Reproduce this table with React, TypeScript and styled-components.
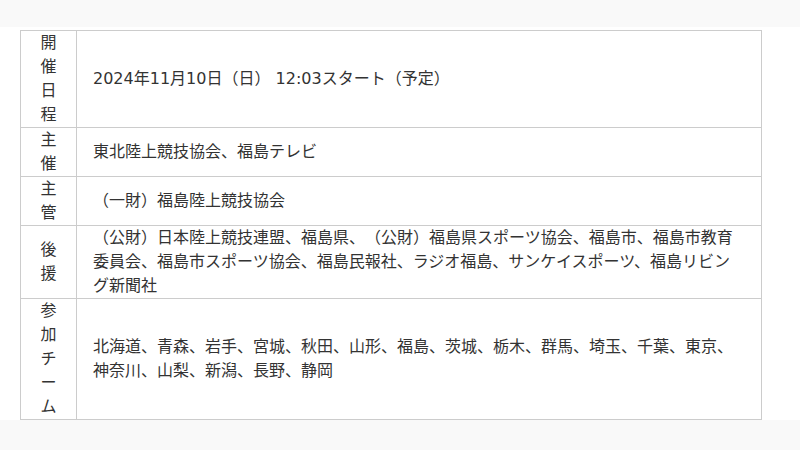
import React from "react";
import styled, { createGlobalStyle } from "styled-components";

const GlobalStyle = createGlobalStyle`
  html, body {
    margin: 0;
    padding: 0;
    background: #f9f9f9;
  }

  body {
    font-family: "DejaVu Sans", "Noto Sans CJK JP", sans-serif;
    color: #333333;
  }
`;

const TopBand = styled.div`
  height: 27px;
  background: #f9f9f9;
`;

const Section = styled.section`
  background: #ffffff;
  padding: 3px 38px 0 20px;
`;

const InfoTable = styled.table`
  width: 100%;
  border-collapse: collapse;
  font-size: 16px;
  line-height: 24px;
  text-spacing-trim: space-all;
  font-feature-settings: normal;
`;

const Label = styled.th`
  width: 23px;
  padding: 0 16px;
  border: 1px solid #cccccc;
  font-weight: normal;
  text-align: center;
  vertical-align: middle;
  color: #333333;
`;

const Value = styled.td`
  padding: 0 16px;
  border: 1px solid #cccccc;
  text-align: left;
  vertical-align: middle;
  color: #333333;
`;

interface InfoRow {
  label: string;
  value: string;
}

const rows: Array<InfoRow> = [
  { label: "開催日程", value: "2024年11月10日（日） 12:03スタート（予定）" },
  { label: "主催", value: "東北陸上競技協会、福島テレビ" },
  { label: "主管", value: "（一財）福島陸上競技協会" },
  {
    label: "後援",
    value:
      "（公財）日本陸上競技連盟、福島県、（公財）福島県スポーツ協会、福島市、福島市教育委員会、福島市スポーツ協会、福島民報社、ラジオ福島、サンケイスポーツ、福島リビング新聞社",
  },
  {
    label: "参加チーム",
    value:
      "北海道、青森、岩手、宮城、秋田、山形、福島、茨城、栃木、群馬、埼玉、千葉、東京、神奈川、山梨、新潟、長野、静岡",
  },
];

const App: React.FC = () => {
  return (
    <>
      <GlobalStyle />
      <TopBand />
      <Section>
        <InfoTable>
          <tbody>
            {rows.map(row => (
              <tr key={row.label}>
                <Label>{row.label}</Label>
                <Value>{row.value}</Value>
              </tr>
            ))}
          </tbody>
        </InfoTable>
      </Section>
    </>
  );
};

export default App;
